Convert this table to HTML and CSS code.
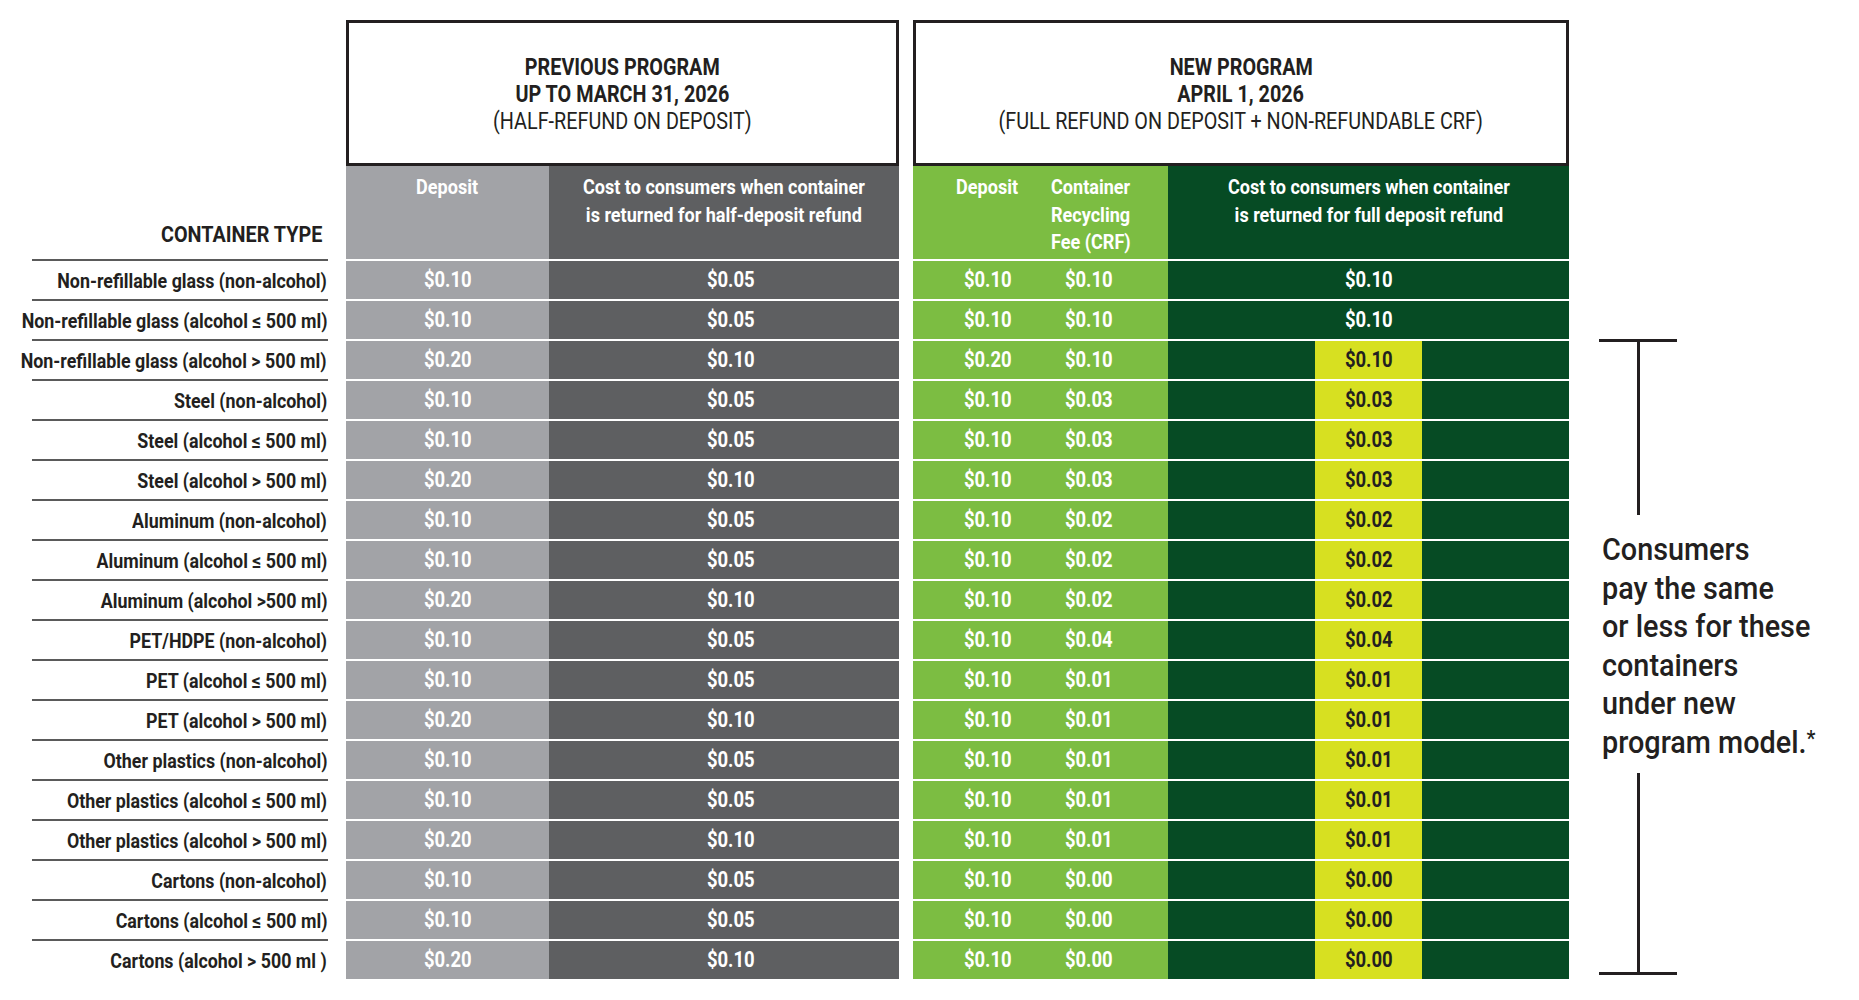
FILE: index.html
```html
<!DOCTYPE html>
<html lang="en">
<head>
<meta charset="utf-8">
<title>Container deposit program comparison</title>
<link rel="stylesheet" href="styles.css">
</head>
<body>
<div class="page">
  <div class="grid head">
    <div class="hbox prev">
      <div class="t1"><span class="cx">PREVIOUS PROGRAM</span></div>
      <div class="t1"><span class="cx">UP TO MARCH 31, 2026</span></div>
      <div class="t2"><span class="cx">(HALF-REFUND ON DEPOSIT)</span></div>
    </div>
    <div class="hbox new">
      <div class="t1"><span class="cx">NEW PROGRAM</span></div>
      <div class="t1"><span class="cx">APRIL 1, 2026</span></div>
      <div class="t2"><span class="cx">(FULL REFUND ON DEPOSIT + NON-REFUNDABLE CRF)</span></div>
    </div>
    <div class="ctype"><span class="cx">CONTAINER TYPE</span></div>
    <div class="ch dep"><span class="cx">Deposit</span></div>
    <div class="ch cost"><span class="cx">Cost to consumers when container<br>is returned for half-deposit refund</span></div>
    <div class="ch g1"><span class="sub"><span class="cx">Deposit</span></span><span class="sub crf"><span class="cx">Container<br>Recycling<br>Fee (CRF)</span></span></div>
    <div class="ch g2"><span class="cx">Cost to consumers when container<br>is returned for full deposit refund</span></div>
  </div>

  <div class="grid body">
    <div class="note">
      <div class="bar"></div>
      <div class="vline vtop"></div>
      <div class="ntext"><span class="cx">Consumers<br>pay the same<br>or less for these<br>containers<br>under new<br>program model.<span class="ast">*</span></span></div>
      <div class="vline vbot"></div>
      <div class="bar"></div>
    </div>

    <div class="lab"><span class="cx">Non-refillable glass (non-alcohol)</span></div>
    <div class="v dep"><span class="cx">$0.10</span></div><div class="v cost"><span class="cx">$0.05</span></div>
    <div class="v g1"><span class="sub"><span class="cx">$0.10</span></span><span class="sub"><span class="cx">$0.10</span></span></div>
    <div class="v g2"><span class="sub"><span class="cx">$0.10</span></span></div>

    <div class="lab"><span class="cx">Non-refillable glass (alcohol ≤ 500 ml)</span></div>
    <div class="v dep"><span class="cx">$0.10</span></div><div class="v cost"><span class="cx">$0.05</span></div>
    <div class="v g1"><span class="sub"><span class="cx">$0.10</span></span><span class="sub"><span class="cx">$0.10</span></span></div>
    <div class="v g2"><span class="sub"><span class="cx">$0.10</span></span></div>

    <div class="lab"><span class="cx">Non-refillable glass (alcohol &gt; 500 ml)</span></div>
    <div class="v dep"><span class="cx">$0.20</span></div><div class="v cost"><span class="cx">$0.10</span></div>
    <div class="v g1"><span class="sub"><span class="cx">$0.20</span></span><span class="sub"><span class="cx">$0.10</span></span></div>
    <div class="v g2"><span class="sub y"><span class="cx">$0.10</span></span></div>

    <div class="lab"><span class="cx">Steel (non-alcohol)</span></div>
    <div class="v dep"><span class="cx">$0.10</span></div><div class="v cost"><span class="cx">$0.05</span></div>
    <div class="v g1"><span class="sub"><span class="cx">$0.10</span></span><span class="sub"><span class="cx">$0.03</span></span></div>
    <div class="v g2"><span class="sub y"><span class="cx">$0.03</span></span></div>

    <div class="lab"><span class="cx">Steel (alcohol ≤ 500 ml)</span></div>
    <div class="v dep"><span class="cx">$0.10</span></div><div class="v cost"><span class="cx">$0.05</span></div>
    <div class="v g1"><span class="sub"><span class="cx">$0.10</span></span><span class="sub"><span class="cx">$0.03</span></span></div>
    <div class="v g2"><span class="sub y"><span class="cx">$0.03</span></span></div>

    <div class="lab"><span class="cx">Steel (alcohol &gt; 500 ml)</span></div>
    <div class="v dep"><span class="cx">$0.20</span></div><div class="v cost"><span class="cx">$0.10</span></div>
    <div class="v g1"><span class="sub"><span class="cx">$0.10</span></span><span class="sub"><span class="cx">$0.03</span></span></div>
    <div class="v g2"><span class="sub y"><span class="cx">$0.03</span></span></div>

    <div class="lab"><span class="cx">Aluminum (non-alcohol)</span></div>
    <div class="v dep"><span class="cx">$0.10</span></div><div class="v cost"><span class="cx">$0.05</span></div>
    <div class="v g1"><span class="sub"><span class="cx">$0.10</span></span><span class="sub"><span class="cx">$0.02</span></span></div>
    <div class="v g2"><span class="sub y"><span class="cx">$0.02</span></span></div>

    <div class="lab"><span class="cx">Aluminum (alcohol ≤ 500 ml)</span></div>
    <div class="v dep"><span class="cx">$0.10</span></div><div class="v cost"><span class="cx">$0.05</span></div>
    <div class="v g1"><span class="sub"><span class="cx">$0.10</span></span><span class="sub"><span class="cx">$0.02</span></span></div>
    <div class="v g2"><span class="sub y"><span class="cx">$0.02</span></span></div>

    <div class="lab"><span class="cx">Aluminum (alcohol &gt;500 ml)</span></div>
    <div class="v dep"><span class="cx">$0.20</span></div><div class="v cost"><span class="cx">$0.10</span></div>
    <div class="v g1"><span class="sub"><span class="cx">$0.10</span></span><span class="sub"><span class="cx">$0.02</span></span></div>
    <div class="v g2"><span class="sub y"><span class="cx">$0.02</span></span></div>

    <div class="lab"><span class="cx">PET/HDPE (non-alcohol)</span></div>
    <div class="v dep"><span class="cx">$0.10</span></div><div class="v cost"><span class="cx">$0.05</span></div>
    <div class="v g1"><span class="sub"><span class="cx">$0.10</span></span><span class="sub"><span class="cx">$0.04</span></span></div>
    <div class="v g2"><span class="sub y"><span class="cx">$0.04</span></span></div>

    <div class="lab"><span class="cx">PET (alcohol ≤ 500 ml)</span></div>
    <div class="v dep"><span class="cx">$0.10</span></div><div class="v cost"><span class="cx">$0.05</span></div>
    <div class="v g1"><span class="sub"><span class="cx">$0.10</span></span><span class="sub"><span class="cx">$0.01</span></span></div>
    <div class="v g2"><span class="sub y"><span class="cx">$0.01</span></span></div>

    <div class="lab"><span class="cx">PET (alcohol &gt; 500 ml)</span></div>
    <div class="v dep"><span class="cx">$0.20</span></div><div class="v cost"><span class="cx">$0.10</span></div>
    <div class="v g1"><span class="sub"><span class="cx">$0.10</span></span><span class="sub"><span class="cx">$0.01</span></span></div>
    <div class="v g2"><span class="sub y"><span class="cx">$0.01</span></span></div>

    <div class="lab"><span class="cx">Other plastics (non-alcohol)</span></div>
    <div class="v dep"><span class="cx">$0.10</span></div><div class="v cost"><span class="cx">$0.05</span></div>
    <div class="v g1"><span class="sub"><span class="cx">$0.10</span></span><span class="sub"><span class="cx">$0.01</span></span></div>
    <div class="v g2"><span class="sub y"><span class="cx">$0.01</span></span></div>

    <div class="lab"><span class="cx">Other plastics (alcohol ≤ 500 ml)</span></div>
    <div class="v dep"><span class="cx">$0.10</span></div><div class="v cost"><span class="cx">$0.05</span></div>
    <div class="v g1"><span class="sub"><span class="cx">$0.10</span></span><span class="sub"><span class="cx">$0.01</span></span></div>
    <div class="v g2"><span class="sub y"><span class="cx">$0.01</span></span></div>

    <div class="lab"><span class="cx">Other plastics (alcohol &gt; 500 ml)</span></div>
    <div class="v dep"><span class="cx">$0.20</span></div><div class="v cost"><span class="cx">$0.10</span></div>
    <div class="v g1"><span class="sub"><span class="cx">$0.10</span></span><span class="sub"><span class="cx">$0.01</span></span></div>
    <div class="v g2"><span class="sub y"><span class="cx">$0.01</span></span></div>

    <div class="lab"><span class="cx">Cartons (non-alcohol)</span></div>
    <div class="v dep"><span class="cx">$0.10</span></div><div class="v cost"><span class="cx">$0.05</span></div>
    <div class="v g1"><span class="sub"><span class="cx">$0.10</span></span><span class="sub"><span class="cx">$0.00</span></span></div>
    <div class="v g2"><span class="sub y"><span class="cx">$0.00</span></span></div>

    <div class="lab"><span class="cx">Cartons (alcohol ≤ 500 ml)</span></div>
    <div class="v dep"><span class="cx">$0.10</span></div><div class="v cost"><span class="cx">$0.05</span></div>
    <div class="v g1"><span class="sub"><span class="cx">$0.10</span></span><span class="sub"><span class="cx">$0.00</span></span></div>
    <div class="v g2"><span class="sub y"><span class="cx">$0.00</span></span></div>

    <div class="lab"><span class="cx">Cartons (alcohol &gt; 500 ml )</span></div>
    <div class="v dep"><span class="cx">$0.20</span></div><div class="v cost"><span class="cx">$0.10</span></div>
    <div class="v g1"><span class="sub"><span class="cx">$0.10</span></span><span class="sub"><span class="cx">$0.00</span></span></div>
    <div class="v g2"><span class="sub y"><span class="cx">$0.00</span></span></div>
  </div>
</div>
</body>
</html>
```

FILE: styles.css
```css
html, body {
  margin: 0;
  background: #ffffff;
}

body {
  color: #231f20;
  font-family: Roboto, "Liberation Sans", sans-serif;
}

/* condensed rendering of the chart's typeface */
.cx {
  display: inline-block;
  white-space: nowrap;
  transform: scaleX(0.86);
  transform-origin: center center;
}

.page {
  padding: 20px 0 0 32px;
}

.grid {
  display: grid;
  grid-template-columns: 296px 18px 203px 350px 14px 255px 401px 1fr;
}

.head {
  grid-template-rows: 146px 93px;
}

.body {
  grid-template-rows: repeat(18, 40px);
}

/* program title boxes */
.hbox {
  grid-row: 1;
  border: 3px solid #231f20;
  padding-top: 3px;
  display: flex;
  flex-direction: column;
  justify-content: center;
  align-items: center;
  text-align: center;
  font-size: 23px;
  line-height: 27px;
}

.prev { grid-column: 3 / 5; }
.new { grid-column: 6 / 8; }

.t1 { font-weight: 700; }
.t2 { font-weight: 400; }

.ctype {
  grid-column: 1;
  grid-row: 2;
  align-self: end;
  display: flex;
  justify-content: flex-end;
  padding: 0 6px 11px 0;
  font-weight: 700;
  font-size: 21.5px;
  line-height: 27px;
}
.ctype .cx {
  transform: scaleX(0.92);
  transform-origin: right center;
}

/* column headers */
.ch {
  grid-row: 2;
  color: #ffffff;
  font-weight: 700;
  font-size: 21px;
  line-height: 27.5px;
  padding-top: 8px;
  text-align: center;
}

.dep { grid-column: 3; background: #a2a3a7; }
.cost { grid-column: 4; background: #5e5f61; }
.g1 {
  grid-column: 6;
  background: #7cbd42;
  display: flex;
  padding-left: 24px;
}
.sub {
  display: block;
  text-align: center;
}
.g1 > .sub { width: 101px; }
.g1 > .crf {
  text-align: left;
  padding-left: 13px;
}
.g1 > .crf .cx { transform-origin: left center; }
.g2 {
  grid-column: 7;
  background: #064b24;
  display: flex;
  justify-content: center;
}
.ch.g2 { display: block; }

/* data rows */
.lab {
  grid-column: 1;
  border-top: 2px solid #5a5a5a;
  display: flex;
  justify-content: flex-end;
  padding: 3px 1px 0 0;
  font-weight: 700;
  font-size: 20.5px;
  line-height: 35px;
}
.lab .cx {
  transform: scaleX(0.87);
  transform-origin: right center;
}

.v {
  border-top: 2px solid #ffffff;
  color: #ffffff;
  font-weight: 700;
  font-size: 21.5px;
  line-height: 38px;
  text-align: center;
}

.v.cost { padding-left: 14px; }

.y {
  width: 107px;
  background: #d7e021;
  color: #231f20;
}

/* annotation bracket */
.note {
  grid-column: 8;
  grid-row: 3 / span 16;
  display: flex;
  flex-direction: column;
  padding: 0 0 4px 30px;
}

.bar {
  width: 78px;
  height: 3px;
  background: #231f20;
}

.vline {
  width: 3px;
  margin-left: 38px;
  background: #231f20;
}

.vtop { height: 173px; }
.vbot { flex: 1; }

.ntext {
  margin: 15px 0 12px 3px;
  font-size: 32px;
  line-height: 38.5px;
  font-weight: 500;
}
.ntext .cx {
  transform: scaleX(0.9);
  transform-origin: left center;
}

.ast {
  font-size: 0.7em;
  line-height: 0;
  vertical-align: 0.3em;
}
```
